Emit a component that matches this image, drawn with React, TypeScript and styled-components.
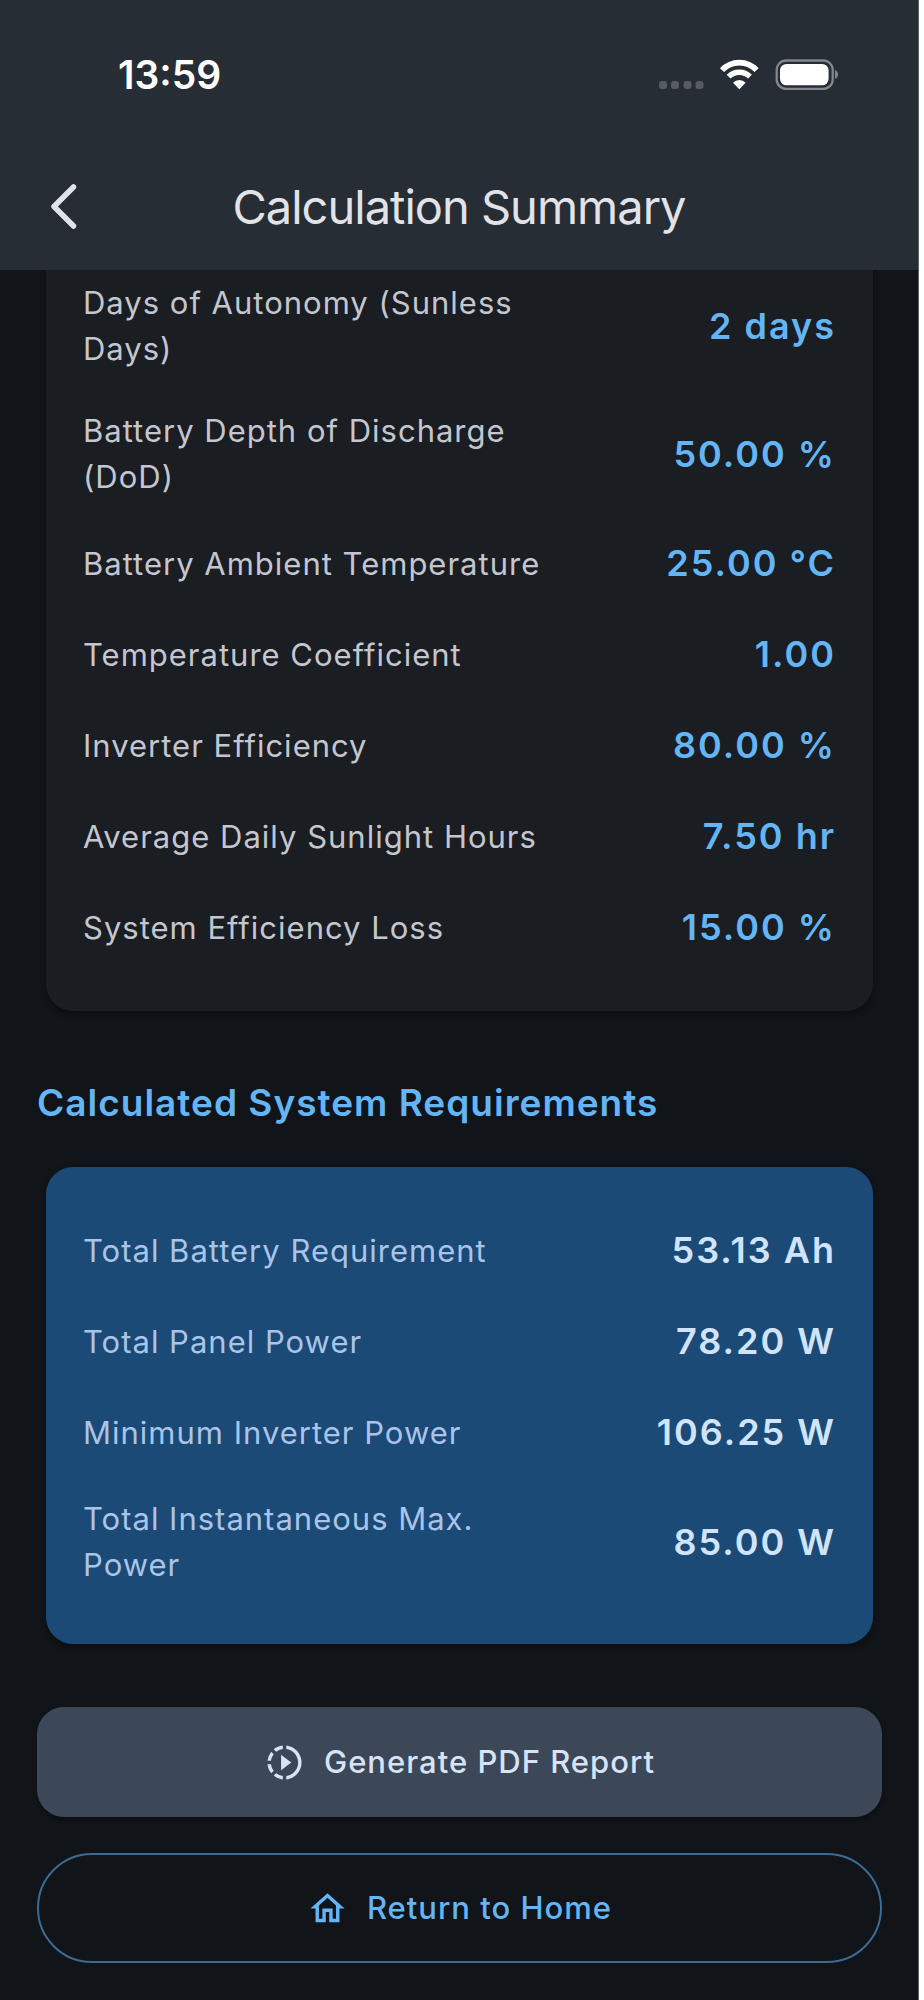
import React from "react";
import styled, { createGlobalStyle } from "styled-components";
import { MdOutlineHome, MdSlowMotionVideo } from "react-icons/md";

const GlobalStyle = createGlobalStyle`
  *, *::before, *::after { box-sizing: border-box; }
  body {
    margin: 0;
    background: #ffffff;
    font-family: Inter, "Liberation Sans", sans-serif;
  }
`;

const Screen = styled.div`
  display: flex;
  flex-direction: column;
  min-height: 100vh;
  margin-right: 5px;
  border-right: 1px solid #5d6167;
  background: #111418;
`;

const Header = styled.header`
  position: sticky;
  top: 0;
  z-index: 1;
  display: flex;
  flex-direction: column;
  height: 270px;
  background: #262d35;
`;

const StatusBar = styled.div`
  display: flex;
  align-items: center;
  justify-content: space-between;
  height: 150px;
  padding: 0 80px 0 118px;
`;

const Clock = styled.time`
  font-size: 39px;
  line-height: 46px;
  font-weight: 600;
  color: #ffffff;
`;

const StatusIcons = styled.svg`
  display: block;
  width: 180px;
  height: 32px;
`;

const TitleBar = styled.div`
  display: grid;
  grid-template-columns: 128px 1fr 128px;
  align-items: center;
  height: 114px;
`;

const BackButton = styled.button`
  display: flex;
  align-items: center;
  height: 96px;
  padding: 0 0 0 46px;
  border: 0;
  background: none;
  color: #e2e2e9;
`;

const PageTitle = styled.h1`
  margin: 0;
  text-align: center;
  font-size: 47px;
  line-height: 64px;
  font-weight: 400;
  letter-spacing: -1px;
  color: #e2e2e9;
`;

const Content = styled.main`
  display: flex;
  flex-direction: column;
  flex: 1;
  padding: 0 36px 37px 37px;
`;

const Card = styled.dl<{ $accent?: boolean; $scrolled?: boolean }>`
  margin: ${(p) => (p.$scrolled ? "-8px" : "0")} 9px 0;
  padding: ${(p) => (p.$scrolled ? "0" : "38px")} 37px 38px;
  border-radius: ${(p) => (p.$scrolled ? "0 0 27px 27px" : "27px")};
  background: ${(p) => (p.$accent ? "#1a4a75" : "#1a1d21")};
  color: ${(p) => (p.$accent ? "#a9c4e8" : "#c3c6cf")};
  box-shadow: 0 3px 6px rgba(0, 0, 0, 0.35);
`;

const Row = styled.div`
  display: flex;
  align-items: center;
  justify-content: space-between;
  padding: 18px 0;
`;

const Label = styled.dt`
  width: 63%;
  font-size: 31px;
  line-height: 46px;
  letter-spacing: 1px;
`;

const Value = styled.dd<{ $accent?: boolean }>`
  margin: 0;
  font-size: 36px;
  line-height: 55px;
  font-weight: 600;
  letter-spacing: 2px;
  white-space: nowrap;
  text-align: right;
  color: ${(p) => (p.$accent ? "#d1e4ff" : "#64b5f6")};
`;

const SectionTitle = styled.h2`
  margin: 64px 0 36px;
  font-size: 37px;
  line-height: 56px;
  font-weight: 600;
  letter-spacing: 1px;
  color: #64b5f6;
`;

const Actions = styled.div`
  display: flex;
  flex-direction: column;
  gap: 36px;
  margin-top: 63px;
`;

const ActionButton = styled.button<{ $outlined?: boolean }>`
  display: flex;
  align-items: center;
  justify-content: center;
  gap: 19px;
  height: 110px;
  border: ${(p) => (p.$outlined ? "2px solid #3b6b94" : "0")};
  border-radius: ${(p) => (p.$outlined ? "55px" : "27px")};
  background: ${(p) => (p.$outlined ? "transparent" : "#3c4858")};
  box-shadow: ${(p) => (p.$outlined ? "none" : "0 3px 4px rgba(0, 0, 0, 0.3)")};
  color: ${(p) => (p.$outlined ? "#64b5f6" : "#d8e3f8")};
  font-family: inherit;
  font-size: 31px;
  line-height: 46px;
  font-weight: 500;
  letter-spacing: 1px;
`;

type Item = { label: string; value: string };

const inputs: Item[] = [
  { label: "Days of Autonomy (Sunless Days)", value: "2 days" },
  { label: "Battery Depth of Discharge (DoD)", value: "50.00 %" },
  { label: "Battery Ambient Temperature", value: "25.00 °C" },
  { label: "Temperature Coefficient", value: "1.00" },
  { label: "Inverter Efficiency", value: "80.00 %" },
  { label: "Average Daily Sunlight Hours", value: "7.50 hr" },
  { label: "System Efficiency Loss", value: "15.00 %" },
];

const requirements: Item[] = [
  { label: "Total Battery Requirement", value: "53.13 Ah" },
  { label: "Total Panel Power", value: "78.20 W" },
  { label: "Minimum Inverter Power", value: "106.25 W" },
  { label: "Total Instantaneous Max. Power", value: "85.00 W" },
];

function SummaryCard({ items, accent, scrolled }: { items: Item[]; accent?: boolean; scrolled?: boolean }) {
  return (
    <Card $accent={accent} $scrolled={scrolled}>
      {items.map((item) => (
        <Row key={item.label}>
          <Label>{item.label}</Label>
          <Value $accent={accent}>{item.value}</Value>
        </Row>
      ))}
    </Card>
  );
}

function DeviceStatus() {
  return (
    <StatusIcons viewBox="0 0 180 32" role="img" aria-label="Wi-Fi connected, battery full">
      <g fill="#575b63">
        <rect x="1" y="22" width="8" height="8" rx="3" />
        <rect x="13" y="22" width="8" height="8" rx="3" />
        <rect x="25.5" y="22" width="8" height="8" rx="3" />
        <rect x="37.5" y="22" width="8" height="8" rx="3" />
      </g>
      <g fill="none" stroke="#ffffff">
        <path d="M64 11.2 A23.5 23.5 0 0 1 98.600 11.2" strokeWidth="5.6" />
        <path d="M70.6 17.7 A15 15 0 0 1 92 17.7" strokeWidth="5.4" />
      </g>
      <path d="M81.3 30.3 L75 23.8 A8.5 8.5 0 0 1 87.6 23.8 Z" fill="#ffffff" />
      <rect x="118.7" y="1.5" width="56" height="28.4" rx="9.5" fill="none" stroke="#83878d" strokeWidth="2.300" />
      <rect x="122" y="4.9" width="48.6" height="21.4" rx="6.5" fill="#ffffff" />
      <path d="M177 11 Q180 12.5 180 15.5 Q180 18.5 177 20 Z" fill="#83878d" />
    </StatusIcons>
  );
}

export default function App() {
  return (
    <>
      <GlobalStyle />
      <Screen>
        <Header>
          <StatusBar>
            <Clock>13:59</Clock>
            <DeviceStatus />
          </StatusBar>
          <TitleBar>
            <BackButton type="button" aria-label="Back">
              <svg width="34" height="50" viewBox="0 0 34 50" fill="none" stroke="currentColor" strokeWidth="5.5" strokeLinecap="round" strokeLinejoin="round">
                <path d="M27.5 5 L8 24.5 L27.5 44" />
              </svg>
            </BackButton>
            <PageTitle>Calculation Summary</PageTitle>
          </TitleBar>
        </Header>
        <Content>
          <SummaryCard items={inputs} scrolled />
          <SectionTitle>Calculated System Requirements</SectionTitle>
          <SummaryCard items={requirements} accent />
          <Actions>
            <ActionButton type="button">
              <MdSlowMotionVideo size={41} aria-hidden />
              Generate PDF Report
            </ActionButton>
            <ActionButton type="button" $outlined>
              <MdOutlineHome size={41} aria-hidden />
              Return to Home
            </ActionButton>
          </Actions>
        </Content>
      </Screen>
    </>
  );
}
